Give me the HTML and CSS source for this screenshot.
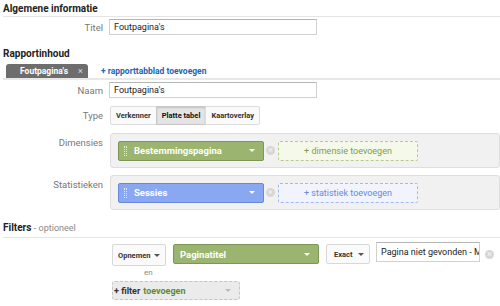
FILE: index.html
```html
<!DOCTYPE html>
<html lang="nl">
<head>
    <meta charset="UTF-8">
    <title>Aangepast rapport</title>
    <link rel="stylesheet" href="styles.css">
</head>
<body>
    <h2 class="section-title">Algemene informatie</h2>
    <div class="row row-title">
        <label class="row-label" for="titel">Titel</label>
        <input class="text-input" type="text" id="titel" value="Foutpagina's">
    </div>

    <h2 class="section-title no-line">Rapportinhoud</h2>
    <div class="tabs">
        <div class="tab">Foutpagina's <span class="tab-close">&times;</span></div>
        <a class="tab-add" href="#">+ rapporttabblad toevoegen</a>
    </div>

    <div class="row row-name">
        <label class="row-label" for="naam">Naam</label>
        <input class="text-input" type="text" id="naam" value="Foutpagina's">
    </div>

    <div class="row row-type">
        <span class="row-label">Type</span>
        <div class="btn-group">
            <button class="seg">Verkenner</button>
            <button class="seg active">Platte tabel</button>
            <button class="seg">Kaartoverlay</button>
        </div>
    </div>

    <div class="row row-panel">
        <span class="row-label">Dimensies</span>
        <div class="panel">
            <div class="chip chip-green">
                <span class="grip"></span>
                <span class="chip-text">Bestemmingspagina</span>
                <span class="caret"></span>
            </div>
            <span class="remove"></span>
            <div class="add-box add-green">+ dimensie toevoegen</div>
        </div>
    </div>

    <div class="row row-panel">
        <span class="row-label">Statistieken</span>
        <div class="panel">
            <div class="chip chip-blue">
                <span class="grip"></span>
                <span class="chip-text">Sessies</span>
                <span class="caret"></span>
            </div>
            <span class="remove"></span>
            <div class="add-box add-blue">+ statistiek toevoegen</div>
        </div>
    </div>

    <h2 class="section-title filters-title">Filters <span class="optional">- optioneel</span></h2>

    <div class="filter-area">
        <div class="filter-row">
            <button class="select-btn opnemen">Opnemen <span class="caret dark"></span></button>
            <div class="chip chip-green filter-chip">
                <span class="chip-text">Paginatitel</span>
                <span class="caret"></span>
            </div>
            <button class="select-btn exact">Exact <span class="caret dark"></span></button>
            <input class="text-input filter-input" type="text" value="Pagina niet gevonden - Makelaar">
            <span class="remove"></span>
        </div>
        <div class="and">en</div>
        <div class="filter-add">+ filter <span class="green-text">toevoegen</span> <span class="caret light"></span></div>
    </div>
</body>
</html>
```

FILE: styles.css
```css
body {
    margin: 0;
    padding: 0 0 0 3px;
    font-family: Roboto, "Liberation Sans", Arial, sans-serif;
    font-size: 9px;
    color: #222;
    background: #fff;
    overflow: hidden;
    width: 497px;
}

.section-title {
    margin: 0;
    padding: 3px 0 2px;
    font-size: 10px;
    font-weight: bold;
    color: #222;
    border-bottom: 1px solid #e5e5e5;
    line-height: 11px;
}

.section-title.no-line {
    border-bottom: none;
    margin-top: 10px;
    padding-bottom: 4px;
}

.row {
    display: flex;
    align-items: flex-start;
}

.row-label {
    width: 100px;
    margin-right: 6px;
    text-align: right;
    color: #777;
    font-size: 9.5px;
    flex-shrink: 0;
}

.row-title,
.row-name {
    margin-top: 2px;
    align-items: center;
}

.text-input {
    width: 208px;
    height: 16px;
    box-sizing: border-box;
    border: 1px solid #d0d0d0;
    border-top-color: #b5b5b5;
    padding: 0 4px;
    font-family: inherit;
    font-size: 9px;
    color: #222;
    margin: 0;
}

.tabs {
    display: flex;
    align-items: flex-end;
    border-bottom: 2px solid #e8e8e8;
    height: 15px;
}

.tab {
    margin-left: 3px;
    width: 82px;
    height: 14px;
    box-sizing: border-box;
    background: #6d6d6d;
    color: #fff;
    font-weight: bold;
    font-size: 8.5px;
    border-radius: 3px 3px 0 0;
    padding: 2px 0 0 14px;
    white-space: nowrap;
}

.tab-close {
    font-weight: normal;
    color: #ddd;
    margin-left: 8px;
    font-size: 9px;
}

.tab-add {
    margin-left: 13px;
    margin-bottom: 2px;
    color: #2463b4;
    font-weight: bold;
    font-size: 8.5px;
    text-decoration: none;
}

.row-type {
    margin-top: 8px;
    align-items: center;
}

.btn-group {
    display: flex;
    margin-left: 1px;
}

.seg {
    height: 19px;
    padding: 0 5px;
    border: 1px solid #dcdcdc;
    background: #fafafa;
    font-family: inherit;
    font-size: 7.5px;
    font-weight: bold;
    color: #333;
    margin: 0 0 0 -1px;
}

.seg:first-child {
    border-radius: 2px 0 0 2px;
    margin-left: 0;
}

.seg:last-child {
    border-radius: 0 2px 2px 0;
}

.seg.active {
    background: #e4e4e4;
    border-color: #c8c8c8;
    box-shadow: inset 0 1px 2px rgba(0, 0, 0, 0.15);
    color: #111;
}

.row-panel {
    margin-top: 8px;
}

.row-panel .row-label {
    padding-top: 4px;
}

.row-panel + .row-panel {
    margin-top: 7px;
}

.panel {
    margin-left: 1px;
    width: 420px;
    height: 35px;
    box-sizing: border-box;
    background: #f1f1f1;
    border: 1px solid #dedede;
    border-radius: 3px;
    display: flex;
    align-items: center;
    padding: 0 7px;
}

.chip {
    display: flex;
    align-items: center;
    width: 146px;
    height: 20px;
    box-sizing: border-box;
    border-radius: 2px;
    color: #fff;
    font-weight: bold;
    font-size: 9.5px;
    padding: 0 6px 0 5px;
    flex-shrink: 0;
}

.chip-green {
    background: #9bb46f;
    border: 1px solid #7d9656;
}

.chip-blue {
    background: #8aa7f1;
    border: 1px solid #6987d8;
}

.grip {
    width: 1px;
    height: 10px;
    margin-right: 7px;
    border-left: 1px dotted rgba(255, 255, 255, 0.75);
    border-right: 1px dotted rgba(255, 255, 255, 0.75);
}

.chip-text {
    flex: 1;
}

.caret {
    width: 0;
    height: 0;
    border-left: 3px solid transparent;
    border-right: 3px solid transparent;
    border-top: 3px solid #fff;
    margin-right: 2px;
}

.caret.dark {
    border-top-color: #555;
    margin: 0 0 0 auto;
}

.caret.light {
    border-top-color: #bbb;
    margin-left: auto;
}

.remove {
    width: 9px;
    height: 9px;
    border-radius: 50%;
    background: #d6d6d6;
    margin: 0 3px 0 2px;
    position: relative;
    flex-shrink: 0;
}

.remove::before {
    content: "\00d7";
    position: absolute;
    left: 0;
    top: -2px;
    width: 9px;
    text-align: center;
    color: #f4f4f4;
    font-size: 9px;
    line-height: 12px;
}

.add-box {
    width: 140px;
    height: 20px;
    box-sizing: border-box;
    border-radius: 2px;
    display: flex;
    align-items: center;
    justify-content: center;
    font-size: 9px;
}

.add-green {
    background: #f5f9ea;
    border: 1px dashed #b7c98f;
    color: #7f9c4e;
}

.add-blue {
    background: #f1f4fd;
    border: 1px dashed #a3b7ee;
    color: #6b88dc;
}

.filters-title {
    margin-top: 9px;
    padding-bottom: 3px;
}

.optional {
    font-weight: normal;
    color: #888;
    font-size: 9px;
}

.filter-area {
    padding-left: 109px;
    padding-top: 6px;
}

.filter-row {
    display: flex;
    align-items: flex-start;
}

.select-btn {
    display: flex;
    align-items: center;
    white-space: nowrap;
    height: 22px;
    box-sizing: border-box;
    border: 1px solid #d8d8d8;
    border-radius: 2px;
    background: #fafafa;
    font-family: inherit;
    font-size: 7.5px;
    font-weight: bold;
    color: #333;
    margin: 0;
    padding: 0 5px 0 5px;
}

.opnemen {
    width: 54px;
}

.exact {
    width: 44px;
    height: 20px;
    margin-left: 7px;
    padding-left: 7px;
}

.filter-chip {
    margin-left: 7px;
    padding-left: 6px;
}

.filter-input {
    width: 104px;
    height: 20px;
    margin-left: 6px;
    margin-top: -2px;
    padding: 0 0 0 4px;
}

.filter-row .remove {
    margin: 6px 0 0 5px;
}

.and {
    padding-left: 32px;
    color: #888;
    font-size: 8px;
    margin-top: 2px;
    line-height: 10px;
}

.filter-add {
    margin-top: 3px;
    width: 128px;
    height: 19px;
    box-sizing: border-box;
    background: #ebebeb;
    border: 1px dashed #c4c4c4;
    border-radius: 3px;
    display: flex;
    align-items: center;
    padding: 0 6px 0 1px;
    font-size: 9px;
    font-weight: bold;
    color: #333;
}

.green-text {
    color: #5f8a3a;
    margin-left: 3px;
}
```
